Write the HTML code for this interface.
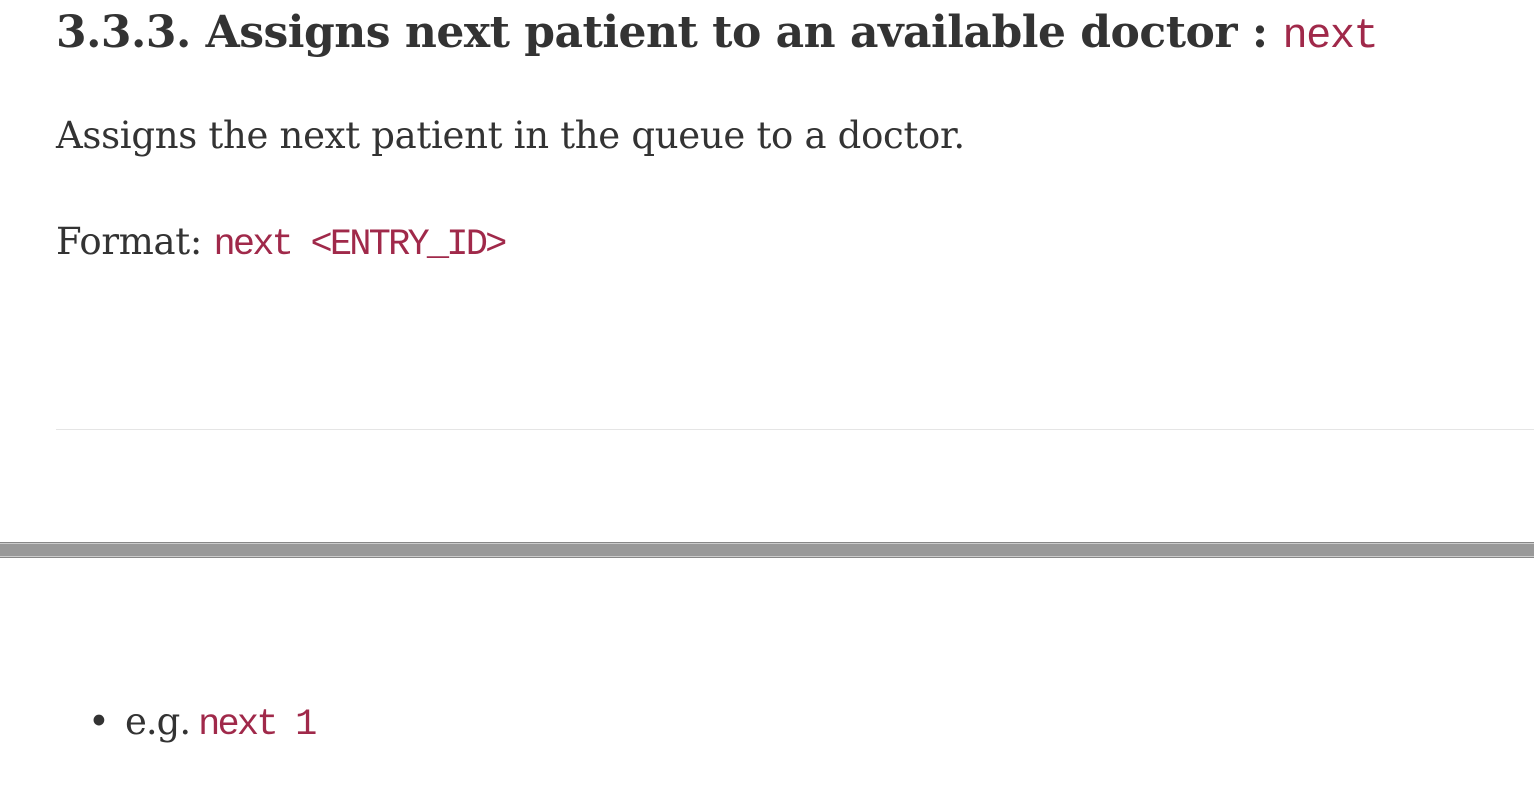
<!DOCTYPE html>
<html><head><style>
body{margin:0;width:1534px;height:808px;background:#fff;position:relative;overflow:hidden;font-family:"DejaVu Serif","Liberation Serif",serif;color:#333}
.t{position:absolute;white-space:nowrap}
code{font-family:"Liberation Mono","DejaVu Sans Mono",monospace;color:#a0294a;letter-spacing:-2.8px}
</style></head><body>
<div class="t" style="left:56px;top:7px;font-size:44px;font-weight:bold;letter-spacing:-0.5px">3.3.3. Assigns next patient to an available doctor : <code style="font-weight:normal;font-size:42px;letter-spacing:-1.5px">next</code></div>
<div class="t" style="left:56px;top:114px;font-size:37px;letter-spacing:-0.3px">Assigns the next patient in the queue to a doctor.</div>
<div class="t" style="left:56px;top:220px;font-size:37px;letter-spacing:-0.3px">Format: <code style="font-size:37px">next &lt;ENTRY_ID&gt;</code></div>
<div style="position:absolute;left:56px;right:0;top:429px;height:1px;background:#e5e5e5"></div>
<div style="position:absolute;left:0;right:0;top:542px;height:16px;background:#999;border-top:1px solid #888;border-bottom:1px solid #888;box-shadow:inset 0 1px 0 #ccc,inset 0 -1px 0 #ccc;box-sizing:border-box"></div>
<div class="t" style="left:88px;top:700px;font-size:37px;letter-spacing:-0.3px">•</div>
<div class="t" style="left:125px;top:700px;font-size:37px;letter-spacing:-1px">e.g.<code style="font-size:37px;margin-left:8px">next 1</code></div>
</body></html>
